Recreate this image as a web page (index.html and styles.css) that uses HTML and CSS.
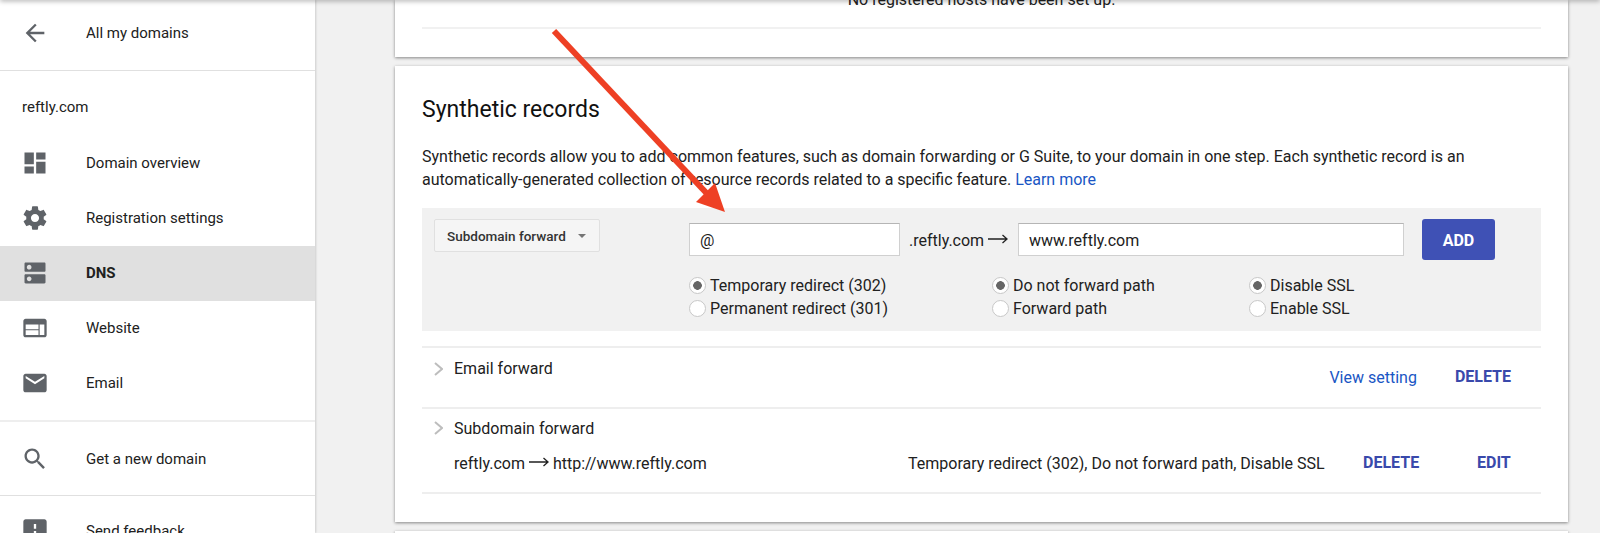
FILE: index.html
```html
<!DOCTYPE html>
<html>
	<head>
		<title>reftly.com - DNS</title>
		<link rel="stylesheet" href="styles.css">
	</head>

	<body>
		<div class="topShadow"></div>

		<div class="sidebar">
			<div class="backRow">
				<svg class="icon" viewBox="0 0 24 24"><path d="M20 11H7.83l5.59-5.59L12 4l-8 8 8 8 1.41-1.41L7.83 13H20v-2z"/></svg>
				All my domains
			</div>
			<div class="domainName">reftly.com</div>
			<div class="navGroup">
				<div class="navItem">
					<svg class="icon" viewBox="0 0 24 24"><path d="M3 13h8V3H3v10zm0 8h8v-6H3v6zm10 0h8V11h-8v10zm0-18v6h8V3h-8z"/></svg>
					Domain overview
				</div>
				<div class="navItem">
					<svg class="icon" viewBox="0 0 24 24"><path d="M19.43 12.98c.04-.32.07-.64.07-.98s-.03-.66-.07-.98l2.11-1.65c.19-.15.24-.42.12-.64l-2-3.46c-.12-.22-.39-.3-.61-.22l-2.49 1c-.52-.4-1.08-.73-1.69-.98l-.38-2.65C14.46 2.18 14.25 2 14 2h-4c-.25 0-.46.18-.49.42l-.38 2.65c-.61.25-1.17.59-1.69.98l-2.49-1c-.23-.09-.49 0-.61.22l-2 3.46c-.13.22-.07.49.12.64l2.11 1.65c-.04.32-.07.65-.07.98s.03.66.07.98l-2.11 1.65c-.19.15-.24.42-.12.64l2 3.46c.12.22.39.3.61.22l2.49-1c.52.4 1.08.73 1.69.98l.38 2.65c.03.24.24.42.49.42h4c.25 0 .46-.18.49-.42l.38-2.65c.61-.25 1.17-.59 1.69-.98l2.49 1c.23.09.49 0 .61-.22l2-3.46c.12-.22.07-.49-.12-.64l-2.11-1.65zM12 15.5c-1.93 0-3.5-1.57-3.5-3.5s1.57-3.5 3.5-3.5 3.5 1.57 3.5 3.5-1.57 3.5-3.5 3.5z"/></svg>
					Registration settings
				</div>
				<div class="navItem active">
					<svg class="icon" viewBox="0 0 24 24"><path d="M20 13H4c-.55 0-1 .45-1 1v6c0 .55.45 1 1 1h16c.55 0 1-.45 1-1v-6c0-.55-.45-1-1-1zM7 19c-1.1 0-2-.9-2-2s.9-2 2-2 2 .9 2 2-.9 2-2 2zM20 3H4c-.55 0-1 .45-1 1v6c0 .55.45 1 1 1h16c.55 0 1-.45 1-1V4c0-.55-.45-1-1-1zM7 9c-1.1 0-2-.9-2-2s.9-2 2-2 2 .9 2 2-.9 2-2 2z"/></svg>
					DNS
				</div>
				<div class="navItem">
					<svg class="icon" viewBox="0 0 24 24"><path d="M20 4H4c-1.1 0-1.99.9-1.99 2L2 18c0 1.1.9 2 2 2h16c1.1 0 2-.9 2-2V6c0-1.1-.9-2-2-2zm-5 14H4v-4h11v4zm0-5H4V9h11v4zm5 5h-4V9h4v9z"/></svg>
					Website
				</div>
				<div class="navItem">
					<svg class="icon" viewBox="0 0 24 24"><path d="M20 4H4c-1.1 0-1.99.9-1.99 2L2 18c0 1.1.9 2 2 2h16c1.1 0 2-.9 2-2V6c0-1.1-.9-2-2-2zm0 4l-8 5-8-5V6l8 5 8-5v2z"/></svg>
					Email
				</div>
			</div>
			<div class="searchRow">
				<svg class="icon" viewBox="0 0 24 24"><path d="M15.5 14h-.79l-.28-.27C15.41 12.59 16 11.11 16 9.5 16 5.91 13.09 3 9.5 3S3 5.91 3 9.5 5.91 16 9.5 16c1.61 0 3.09-.59 4.23-1.57l.27.28v.79l5 4.99L20.49 19l-4.99-5zm-6 0C7.01 14 5 11.99 5 9.5S7.01 5 9.5 5 14 7.01 14 9.5 11.99 14 9.5 14z"/></svg>
				Get a new domain
			</div>
			<div class="feedbackRow">
				<svg class="icon" viewBox="0 0 24 24"><path d="M20 2H4c-1.1 0-1.99.9-1.99 2L2 22l4-4h14c1.1 0 2-.9 2-2V4c0-1.1-.9-2-2-2zm-7 12h-2v-2h2v2zm0-4h-2V6h2v4z"/></svg>
				Send feedback
			</div>
		</div>

		<div class="main">
			<div class="card hostsCard">
				<div class="noHosts">No registered hosts have been set up.</div>
			</div>

			<div class="card syntheticCard">
				<h2>Synthetic records</h2>
				<p class="intro">Synthetic records allow you to add common features, such as domain forwarding or G Suite, to your domain in one step. Each synthetic record is an automatically-generated collection of resource records related to a specific feature. <a href="#">Learn more</a></p>

				<div class="addPanel">
					<div class="selectCol">
						<div class="select">Subdomain forward<span class="caret"></span></div>
					</div>
					<div class="formCol">
						<div class="inputRow">
							<div class="textInput subdomainInput">@</div>
							<div class="domainSuffix">.reftly.com <svg class="arrow" viewBox="0 0 20 10"><path d="M0 5h19M14.500 1l4.500 4-4.500 4"/></svg></div>
							<div class="textInput targetInput">www.reftly.com</div>
							<div class="addButton">ADD</div>
						</div>
						<div class="radioRow">
							<div class="radioGroup redirectGroup">
								<div class="radio"><span class="dot on"></span>Temporary redirect (302)</div>
								<div class="radio"><span class="dot"></span>Permanent redirect (301)</div>
							</div>
							<div class="radioGroup pathGroup">
								<div class="radio"><span class="dot on"></span>Do not forward path</div>
								<div class="radio"><span class="dot"></span>Forward path</div>
							</div>
							<div class="radioGroup">
								<div class="radio"><span class="dot on"></span>Disable SSL</div>
								<div class="radio"><span class="dot"></span>Enable SSL</div>
							</div>
						</div>
					</div>
				</div>

				<div class="record emailRecord">
					<svg class="chevron" viewBox="0 0 9 14"><path d="M1 1l7 6-7 6"/></svg>
					<span class="recordName">Email forward</span>
					<span class="recordLinks">
						<a class="viewLink" href="#">View setting</a>
						<a class="action" href="#">DELETE</a>
					</span>
				</div>

				<div class="record subdomainRecord">
					<div class="recordHead">
						<svg class="chevron" viewBox="0 0 9 14"><path d="M1 1l7 6-7 6"/></svg>
						<span class="recordName">Subdomain forward</span>
					</div>
					<div class="recordBody">
						<span class="forwardFrom">reftly.com <svg class="arrow" viewBox="0 0 20 10"><path d="M0 5h19M14.500 1l4.500 4-4.500 4"/></svg> http://www.reftly.com</span>
						<span class="forwardInfo">Temporary redirect (302), Do not forward path, Disable SSL</span>
						<a class="action deleteAction" href="#">DELETE</a>
						<a class="action editAction" href="#">EDIT</a>
					</div>
				</div>
			</div>

			<div class="card nextCard"></div>
		</div>

		<svg class="annotation" width="1600" height="533" viewBox="0 0 1600 533">
			<line x1="554" y1="31" x2="712" y2="199" stroke="#ee4024" stroke-width="6"/>
			<polygon points="725,212 696,202 715,183" fill="#ee4024"/>
		</svg>
	</body>
</html>
```

FILE: styles.css
```css
* {
	box-sizing: border-box;
}
html, body {
	margin: 0;
	height: 533px;
	overflow: hidden;
}
body {
	display: flex;
	background: #f1f1f1;
	color: #212121;
	font-family: Roboto, "Liberation Sans", sans-serif;
	font-size: 15px;
}
a {
	text-decoration: none;
}

.topShadow {
	position: absolute;
	top: -4px;
	left: 0;
	width: 100%;
	height: 4px;
	box-shadow: 0 1px 5px rgba(0,0,0,.35);
	z-index: 2;
}
.annotation {
	position: absolute;
	top: 0;
	left: 0;
	z-index: 3;
}

/* left nav */
.sidebar {
	flex: none;
	width: 315px;
	height: 533px;
	background: #fff;
	box-shadow: 1px 0 2px rgba(0,0,0,.15);
	overflow: hidden;
}
.icon {
	flex: none;
	width: 28px;
	height: 28px;
	margin-right: 37px;
	fill: #5f6368;
}
.backRow, .navItem, .searchRow, .feedbackRow {
	display: flex;
	align-items: center;
	padding-left: 21px;
}
.backRow {
	height: 71px;
	padding-bottom: 4px;
	border-bottom: 1px solid #e0e0e0;
}
.domainName {
	height: 65px;
	padding: 27px 0 0 22px;
}
.navGroup {
	height: 286px;
	border-bottom: 2px solid #eeeeee;
}
.navItem {
	height: 55px;
	padding-bottom: 2px;
}
.navItem.active {
	background: #e0e0e0;
	font-weight: 700;
}
.searchRow {
	height: 74px;
	border-bottom: 1px solid #e0e0e0;
}
.feedbackRow {
	height: 70px;
}

/* right side */
.main {
	flex: none;
	width: 1253px;
	padding-left: 80px;
	font-size: 16px;
}
.card {
	background: #fff;
	box-shadow: 0 1px 3px rgba(0,0,0,.45);
	padding: 0 27px;
}
.hostsCard {
	display: flow-root;
	height: 57px;
}
.noHosts {
	height: 39px;
	margin-top: -10px;
	padding-bottom: 18px;
	line-height: 20px;
	text-align: center;
	border-bottom: 2px solid #f1f1f1;
}
.syntheticCard {
	height: 456px;
	margin-top: 9px;
	padding-top: 29px;
}
.nextCard {
	height: 60px;
	margin-top: 9px;
}
h2 {
	margin: 0;
	font-size: 23px;
	font-weight: 400;
	line-height: 30px;
	color: #111;
}
.intro {
	margin: 20px 0 0;
	line-height: 23px;
	height: 63px;
}
.intro a, .viewLink {
	color: #1a56c4;
}

.addPanel {
	display: flex;
	height: 123px;
	padding: 11px 0 0 12px;
	background: #f1f1f1;
}
.selectCol {
	flex: none;
	width: 255px;
}
.select {
	display: flex;
	align-items: center;
	width: 166px;
	height: 33px;
	padding-left: 12px;
	background: #f5f5f5;
	border: 1px solid #e0e0e0;
	border-radius: 2px;
	font-size: 13.5px;
	font-weight: 500;
	color: #333;
}
.caret {
	margin-left: 12px;
	border-left: 4px solid transparent;
	border-right: 4px solid transparent;
	border-top: 4px solid #757575;
}
.inputRow {
	display: flex;
	align-items: center;
	height: 41px;
}
.textInput {
	height: 33px;
	line-height: 33px;
	padding-left: 10px;
	background: #fff;
	border: 1px solid #d0d0d0;
	border-top-color: #b5b5b5;
}
.subdomainInput {
	width: 211px;
}
.domainSuffix {
	width: 118px;
	padding: 2px 0 0 9px;
	white-space: nowrap;
}
.arrow {
	width: 20px;
	height: 10px;
	vertical-align: 2px;
	fill: none;
	stroke: #212121;
	stroke-width: 1.3;
}
.targetInput {
	width: 386px;
}
.addButton {
	width: 73px;
	height: 41px;
	margin-left: 18px;
	line-height: 43px;
	text-align: center;
	background: #3f51b5;
	border-radius: 3px;
	color: #fff;
	font-weight: 700;
}
.radioRow {
	display: flex;
	margin-top: 14px;
}
.radioGroup {
	flex: none;
}
.redirectGroup {
	width: 303px;
}
.pathGroup {
	width: 257px;
}
.radio {
	display: flex;
	align-items: center;
	height: 23px;
}
.dot {
	width: 17px;
	height: 17px;
	margin-right: 4px;
	background: #fff;
	border: 1px solid #c8c8c8;
	border-radius: 50%;
}
.dot.on {
	background: radial-gradient(circle, #666 0 4px, #fff 4.6px);
}

.record {
	border-top: 2px solid #eeeeee;
}
.chevron {
	flex: none;
	width: 9px;
	height: 14px;
	margin: 0 11px 0 12px;
	fill: none;
	stroke: #bdbdbd;
	stroke-width: 2;
}
.emailRecord {
	display: flex;
	align-items: flex-start;
	height: 61px;
	margin-top: 15px;
	padding-top: 11px;
}
.emailRecord .chevron {
	margin-top: 3px;
}
.recordLinks {
	display: flex;
	margin-left: auto;
	padding-top: 9px;
}
.viewLink {
	margin-right: 38px;
}
.action {
	color: #3949ab;
	font-weight: 700;
	line-height: 18px;
}
.emailRecord .action {
	margin-right: 30px;
}
.subdomainRecord {
	height: 87px;
	padding-top: 9px;
	border-bottom: 2px solid #eeeeee;
}
.recordHead {
	display: flex;
	align-items: center;
	height: 20px;
}
.recordBody {
	display: flex;
	align-items: center;
	height: 20px;
	margin-top: 15px;
	padding-left: 32px;
}
.forwardFrom {
	width: 454px;
}
.forwardInfo {
	width: 455px;
}
.deleteAction {
	width: 114px;
}
```
